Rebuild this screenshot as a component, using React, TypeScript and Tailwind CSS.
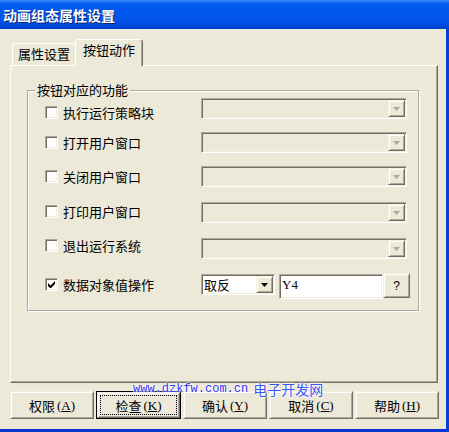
import React from "react";

const sunken =
  "border border-t-[#aca899] border-l-[#aca899] border-b-white border-r-white shadow-[inset_1px_1px_#716f64,inset_-1px_-1px_#f1efe2]";
const raised =
  "border border-t-[#f1efe2] border-l-[#f1efe2] border-b-[#716f64] border-r-[#716f64] shadow-[inset_1px_1px_#fff,inset_-1px_-1px_#aca899]";

function Arrow({ disabled }: { disabled?: boolean }) {
  return (
    <svg width="7" height="4" viewBox="0 0 7 4" className="block">
      <path d="M0 0h7L3.5 4z" fill={disabled ? "#aca899" : "#000"} />
    </svg>
  );
}

function DropBtn({ disabled }: { disabled?: boolean }) {
  return (
    <div className={`w-[17px] h-[17px] bg-[#ece9d8] flex items-center justify-center ${raised}`}>
      <Arrow disabled={disabled} />
    </div>
  );
}

function CheckBox({ checked }: { checked?: boolean }) {
  return (
    <div className={`w-[13px] h-[13px] bg-white flex items-center justify-center shrink-0 ${sunken}`}>
      {checked && (
        <svg width="7" height="7" viewBox="0 0 7 7" className="block">
          <path d="M0 2v3l2 2h1l4-4V0L2.5 4.5z" fill="#000" />
        </svg>
      )}
    </div>
  );
}

function Row({ label, h, cbTop }: { label: string; h: string; cbTop: string }) {
  return (
    <div className={`flex ${h}`}>
      <div className={`ml-[17px] w-[156px] h-[13px] flex items-center gap-[5px] ${cbTop}`}>
        <CheckBox />
        <span className="text-[13px] leading-[13px] text-black whitespace-nowrap">{label}</span>
      </div>
      <div className={`w-[206px] h-[21px] p-[1px] bg-[#ece9d8] flex justify-end ${sunken}`}>
        <DropBtn disabled />
      </div>
    </div>
  );
}

function Btn({ zh, k, focused }: { zh: string; k: string; focused?: boolean }) {
  const inner = (
    <span className="flex items-center text-[13px] leading-[15px] text-black">
      <span>{zh}</span>
      <span className="ml-[2px] font-['Liberation_Serif',serif] text-[13px]">
        (<span className="underline underline-offset-[1px]">{k}</span>)
      </span>
    </span>
  );
  if (focused) {
    return (
      <div className="w-[85px] h-[28px] border border-black bg-[#ece9d8]">
        <div className={`w-full h-full p-[2px] ${raised}`}>
          <div className="w-full h-full border border-dotted border-black flex items-center justify-center">
            {inner}
          </div>
        </div>
      </div>
    );
  }
  return (
    <div className={`w-[84px] h-[28px] bg-[#ece9d8] flex items-center justify-center ${raised}`}>{inner}</div>
  );
}

export default function App() {
  return (
    <div className="w-[449px] h-[432px] bg-[#ece9d8] flex flex-col overflow-hidden relative font-['Noto_Sans_CJK_SC','Noto_Sans',sans-serif]">
      {/* title bar */}
      <div className="h-[29px] shrink-0 flex items-center pl-[3px] bg-[linear-gradient(to_bottom,#3c8efb_0px,#0a63ee_3px,#0058ee_8px,#0055eb_20px,#0048da_26px,#003fcc_29px)]">
        <span className="text-white font-bold text-[14px] leading-[16px] [text-shadow:1px_1px_#0a2470]">
          动画组态属性设置
        </span>
      </div>

      {/* body */}
      <div className="flex-1 flex flex-col border-r-[3px] border-b-[3px] border-r-[#0841d8] border-b-[#0836d2]">
        {/* tabs */}
        <div className="flex items-end h-[26px] ml-[12px] mt-[10px]">
          <div className="w-[63px] h-[22px] border-l border-t border-white rounded-tl-[3px] flex justify-center pt-[2px] text-[13px] leading-[15px] text-black">
            属性设置
          </div>
          <div className="relative z-10 w-[68px] h-[27px] -mb-[1px] bg-[#ece9d8] border-l border-t border-r border-l-white border-t-white border-r-[#716f64] shadow-[inset_-1px_0_#aca899] rounded-tl-[3px] rounded-tr-[3px] flex justify-center pt-[2px] text-[13px] leading-[15px] text-black">
            按钮动作
          </div>
        </div>

        {/* panel */}
        <div className="ml-[10px] w-[428px] h-[318px] border border-l-white border-t-white border-r-[#716f64] border-b-[#716f64] shadow-[inset_-1px_-1px_#aca899]">
          <div className="ml-[16px] mt-[24px] w-[392px] h-[221px] relative border border-[#aca899] shadow-[inset_1px_1px_#fff,1px_1px_#fff]">
            <div className="absolute left-[7px] top-[-9px] px-[2px] bg-[#ece9d8] text-[13px] leading-[15px] text-black">
              按钮对应的功能
            </div>
            <div className="pt-[7px] flex flex-col">
              <Row label="执行运行策略块" h="h-[34px]" cbTop="mt-[8px]" />
              <Row label="打开用户窗口" h="h-[34px]" cbTop="mt-[4px]" />
              <Row label="关闭用户窗口" h="h-[36px]" cbTop="mt-[4px]" />
              <Row label="打印用户窗口" h="h-[36px]" cbTop="mt-[3px]" />
              <Row label="退出运行系统" h="h-[36px]" cbTop="mt-[1px]" />
              <div className="flex h-[26px]">
                <div className="ml-[17px] w-[156px] h-[13px] flex items-center gap-[5px] mt-[4px]">
                  <CheckBox checked />
                  <span className="text-[13px] leading-[13px] text-black whitespace-nowrap">数据对象值操作</span>
                </div>
                <div className={`w-[74px] h-[21px] p-[1px] bg-white flex items-center justify-between ${sunken}`}>
                  <span className="pl-[1px] text-[13px] leading-[15px] text-black">取反</span>
                  <DropBtn />
                </div>
                <div className={`ml-[4px] w-[104px] h-[25px] bg-white px-[2px] pt-[2px] font-['Liberation_Serif',serif] text-[13px] leading-[15px] text-black ${sunken}`}>
                  Y4
                </div>
                <div className={`w-[27px] h-[25px] -mt-[1px] bg-[#ece9d8] flex items-center justify-center font-['Liberation_Sans',sans-serif] text-[12px] leading-[14px] text-black ${raised}`}>
                  ?
                </div>
              </div>
            </div>
          </div>
        </div>

        {/* buttons */}
        <div className="flex gap-[2px] ml-[10px] mt-[8px] items-start">
          <Btn zh="权限" k="A" />
          <Btn zh="检查" k="K" focused />
          <Btn zh="确认" k="Y" />
          <Btn zh="取消" k="C" />
          <Btn zh="帮助" k="H" />
        </div>
      </div>

      {/* watermark overlay */}
      <div className="absolute left-[133px] top-[382px] flex items-center pointer-events-none [text-shadow:0_0_2px_#fff,0_0_2px_#fff,0_0_3px_#fff]">
        <span className="font-['Liberation_Mono',monospace] text-[12px] leading-[14px] text-[#3535f0]">www.dzkfw.com.cn</span>
        <span className="ml-[5px] text-[14px] leading-[14px] text-[#3a55f5]">电子开发网</span>
      </div>
    </div>
  );
}
